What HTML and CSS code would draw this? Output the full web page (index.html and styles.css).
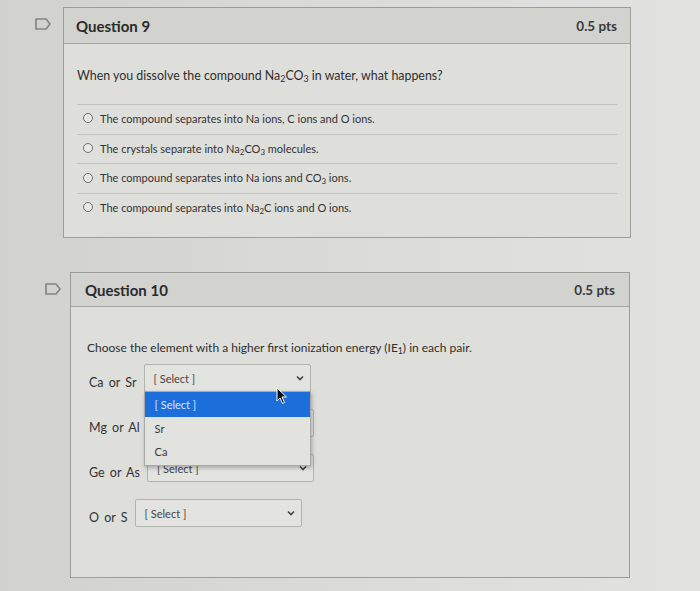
FILE: index.html
```html
<!DOCTYPE html>
<html>
<head>
<meta charset="utf-8">
<link rel="stylesheet" href="styles.css">
</head>
<body>
<div class="page">
  <div class="qrow q9row">
    <div class="flag">
      <svg width="16" height="12" viewBox="0 0 16 12"><path d="M1 1 H11 L15 6 L11 11 H1 Z" fill="none" stroke="#858583" stroke-width="1.7" stroke-linejoin="round"/></svg>
    </div>
    <div class="card q9">
      <div class="card-head">
        <span class="qtitle">Question 9</span>
        <span class="pts">0.5 pts</span>
      </div>
      <div class="card-body">
        <p class="prompt">When you dissolve the compound Na<sub>2</sub>CO<sub>3</sub> in water, what happens?</p>
        <ul class="answers">
          <li><span class="radio"></span><span class="atext">The compound separates into Na ions, C ions and O ions.</span></li>
          <li><span class="radio"></span><span class="atext">The crystals separate into Na<sub>2</sub>CO<sub>3</sub> molecules.</span></li>
          <li><span class="radio"></span><span class="atext">The compound separates into Na ions and CO<sub>3</sub> ions.</span></li>
          <li><span class="radio"></span><span class="atext">The compound separates into Na<sub>2</sub>C ions and O ions.</span></li>
        </ul>
      </div>
    </div>
  </div>

  <div class="qrow q10row">
    <div class="flag">
      <svg width="16" height="12" viewBox="0 0 16 12"><path d="M1 1 H11 L15 6 L11 11 H1 Z" fill="none" stroke="#858583" stroke-width="1.7" stroke-linejoin="round"/></svg>
    </div>
    <div class="card q10">
      <div class="card-head">
        <span class="qtitle">Question 10</span>
        <span class="pts">0.5 pts</span>
      </div>
      <div class="card-body">
        <p class="prompt p10">Choose the element with a higher first ionization energy (IE<sub>1</sub>) in each pair.</p>
        <div class="pairs">
          <div class="pair">
            <span class="plabel">Ca or Sr</span>
            <div class="selwrap">
              <div class="select"><span>[ Select ]</span><svg class="chev" width="8" height="6" viewBox="0 0 8 6"><path d="M1 1.5 L4 4.5 L7 1.5" fill="none" stroke="#444" stroke-width="1.6"/></svg></div>
              <ul class="menu">
                <li class="hl">[ Select ]</li>
                <li>Sr</li>
                <li>Ca</li>
              </ul>
              <svg class="cursor" width="12" height="18" viewBox="0 0 12 18"><path d="M1 1 L1 14 L4 11 L6.5 16.5 L8.5 15.5 L6 10 L10.5 10 Z" fill="#111" stroke="#fff" stroke-width="1"/></svg>
            </div>
          </div>
          <div class="pair">
            <span class="plabel">Mg or Al</span>
            <div class="select"><span>[ Select ]</span><svg class="chev" width="8" height="6" viewBox="0 0 8 6"><path d="M1 1.5 L4 4.5 L7 1.5" fill="none" stroke="#444" stroke-width="1.6"/></svg></div>
          </div>
          <div class="pair">
            <span class="plabel">Ge or As</span>
            <div class="select"><span>[ Select ]</span><svg class="chev" width="8" height="6" viewBox="0 0 8 6"><path d="M1 1.5 L4 4.5 L7 1.5" fill="none" stroke="#444" stroke-width="1.6"/></svg></div>
          </div>
          <div class="pair">
            <span class="plabel">O or S</span>
            <div class="select"><span>[ Select ]</span><svg class="chev" width="8" height="6" viewBox="0 0 8 6"><path d="M1 1.5 L4 4.5 L7 1.5" fill="none" stroke="#444" stroke-width="1.6"/></svg></div>
          </div>
        </div>
      </div>
    </div>
  </div>
</div>
</body>
</html>
```

FILE: styles.css
```css
* { box-sizing: border-box; }
html, body { margin: 0; padding: 0; }
body {
  width: 700px;
  height: 591px;
  overflow: hidden;
  font-family: Lato, "Open Sans", "Liberation Sans", sans-serif;
  color: #2f2f2f;
  background: linear-gradient(90deg, #d1d1ce 0%, #dadad7 45%, #e2e2e0 100%);
}
.page { padding-top: 7px; }
.qrow { display: flex; align-items: flex-start; }
.q9row { padding-left: 35px; }
.q10row { padding-left: 45px; margin-top: 34px; }
.flag { width: 16px; height: 12px; }
.q9row .flag { margin-top: 11px; margin-right: 12px; }
.q10row .flag { margin-top: 11px; margin-right: 9px; }
.flag svg { display: block; }

.card {
  border: 1px solid #9c9c99;
  background: #dededb;
}
.q9 { width: 568px; height: 231px; }
.q10 { width: 560px; height: 306px; }
.card-head {
  display: flex;
  justify-content: space-between;
  align-items: center;
  background: #d2d2cf;
  border-bottom: 1px solid #a3a3a0;
  padding: 0 13px 0 12px;
}
.q9 .card-head { height: 36px; }
.q10 .card-head { height: 34px; padding: 0 14px 0 14px; }
.qtitle { font-size: 15px; font-weight: 700; color: #2b2b2b; }
.pts { font-size: 13.5px; font-weight: 700; color: #3a3a3a; }

.prompt { margin: 0; font-size: 12.4px; line-height: 16px; }
.p10 { font-size: 12px; }
sub { font-size: 0.72em; line-height: 0; vertical-align: -0.25em; }

.q9 .card-body { padding: 24px 13px 0 13px; }
.answers { list-style: none; margin: 20px 0 0 0; padding: 0; }
.answers li {
  height: 29.7px;
  display: flex;
  align-items: center;
  border-top: 1px solid #c2c2bf;
  font-size: 11px;
  color: #333;
  padding-bottom: 2px;
}
.radio {
  width: 10px;
  height: 10px;
  border: 1.3px solid #6f6f6d;
  border-radius: 50%;
  margin: 0 7px 0 6px;
  background: #e8e8e6;
  flex: none;
}

.q10 .card-body { padding: 33px 16px 0 16px; }
.pairs { display: flex; flex-direction: column; gap: 17px; margin-top: 8px; }
.pair { display: flex; align-items: center; }
.plabel { font-size: 12.5px; word-spacing: 2px; color: #333; margin-left: 2px; margin-right: 7px; padding-top: 8px; }
.selwrap { position: relative; }
.select {
  width: 167px;
  height: 28px;
  border: 1px solid #b2b2af;
  border-radius: 2px;
  background: #e3e3e0;
  display: flex;
  align-items: center;
  justify-content: space-between;
  padding: 0 6px 0 9px;
  font-size: 11px;
  color: #444;
}
.chev { display: block; }
.menu {
  position: absolute;
  left: 0;
  top: 27px;
  width: 167px;
  margin: 0;
  padding: 0 0 2px 0;
  list-style: none;
  background: #e2e2df;
  border: 1px solid #a9a9a6;
  box-shadow: 1px 2px 4px rgba(0,0,0,0.25);
  font-size: 11px;
  color: #3a3a3a;
  z-index: 2;
}
.menu li { height: 23px; display: flex; align-items: center; padding-left: 10px; }
.menu li.hl { height: 25px; background: #1c6fdb; color: #d6e6ff; }
.cursor { position: absolute; left: 132px; top: 23px; z-index: 3; }
```
